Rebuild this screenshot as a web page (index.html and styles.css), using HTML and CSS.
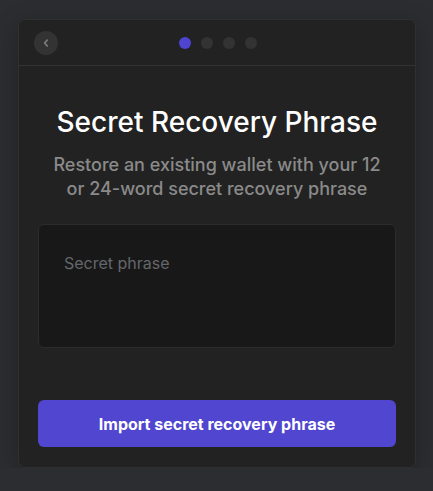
FILE: index.html
```html
<!DOCTYPE html>
<html lang="en">

<head>
    <meta charset="UTF-8">
    <meta name="viewport" content="width=device-width, initial-scale=1.0">
    <title>Secret Recovery Phrase</title>
    <link rel="stylesheet" href="styles.css">
</head>

<body>
    <div class="card">
        <div class="card-header">
            <button class="back-btn" aria-label="Back">
                <svg width="10" height="10" viewBox="0 0 10 10">
                    <path d="M6.2 2.2 L3.6 5 L6.2 7.8" fill="none" stroke="#7a7a7a" stroke-width="1.8"
                        stroke-linecap="round" stroke-linejoin="round" />
                </svg>
            </button>
            <div class="steps">
                <span class="dot active"></span>
                <span class="dot"></span>
                <span class="dot"></span>
                <span class="dot"></span>
            </div>
        </div>
        <div class="card-body">
            <h1>Secret Recovery Phrase</h1>
            <p class="subtitle">Restore an existing wallet with your 12 or 24-word secret recovery phrase</p>
            <textarea class="phrase" placeholder="Secret phrase"></textarea>
            <button class="import-btn">Import secret recovery phrase</button>
        </div>
    </div>
</body>

</html>
```

FILE: styles.css
```css
body {
    font-family: Inter, "Noto Sans", sans-serif;
    background-color: #2c2d31;
    margin: 0;
    padding: 19px 17px 0 18px;
}

.card {
    background-color: #222222;
    border: 1px solid #303030;
    border-radius: 7px;
    box-shadow: 0 6px 24px rgba(0, 0, 0, 0.25);
    height: 449px;
    box-sizing: border-box;
}

.card-header {
    height: 45px;
    border-bottom: 1px solid #333333;
    display: flex;
    align-items: center;
    padding: 0 15px;
    position: relative;
}

.back-btn {
    width: 24px;
    height: 24px;
    border-radius: 50%;
    border: none;
    padding: 0;
    background-color: #333333;
    display: flex;
    align-items: center;
    justify-content: center;
    cursor: pointer;
}

.steps {
    position: absolute;
    left: 160px;
    top: 17px;
    display: flex;
    gap: 10px;
}

.dot {
    width: 12px;
    height: 12px;
    border-radius: 50%;
    background-color: #333333;
}

.dot.active {
    background-color: #4d44cf;
}

.card-body {
    padding: 0 19px;
    display: flex;
    flex-direction: column;
}

h1 {
    margin: 39px 0 0;
    text-align: center;
    color: #ffffff;
    font-size: 28px;
    font-weight: 500;
    line-height: 34px;
}

.subtitle {
    margin: 14px 0 0;
    padding: 0 10px;
    text-align: center;
    color: #8a8a8a;
    font-size: 18px;
    font-weight: 500;
    line-height: 24px;
}

.phrase {
    margin-top: 23px;
    height: 124px;
    box-sizing: border-box;
    resize: none;
    background-color: #181818;
    border: 1px solid #2c2c2c;
    border-radius: 6px;
    padding: 28px 25px;
    font-family: Inter, "Noto Sans", sans-serif;
    font-size: 16px;
    color: #ffffff;
    outline: none;
}

.phrase::placeholder {
    color: #63676b;
}

.import-btn {
    margin-top: 52px;
    height: 47px;
    border: none;
    border-radius: 6px;
    background-color: #5046cf;
    color: #ffffff;
    font-family: Inter, "Noto Sans", sans-serif;
    font-size: 16px;
    font-weight: 700;
    cursor: pointer;
}
```
